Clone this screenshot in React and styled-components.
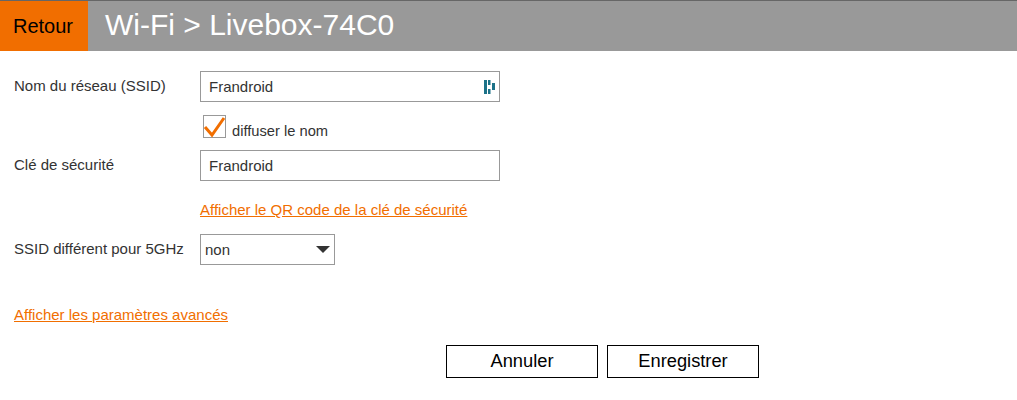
import React from 'react'
import styled, { createGlobalStyle } from 'styled-components'

const GlobalStyle = createGlobalStyle`
  body {
    margin: 0;
    background: #fff;
    font-family: "Liberation Sans", Arial, sans-serif;
    color: #333;
  }
`
const Header = styled.header`
  display: flex;
  height: 50px;
  background: #999;
  border-top: 1px solid #666;
`
const BackButton = styled.div`
  box-sizing: border-box;
  width: 88px;
  padding-left: 13px;
  background: #f16e00;
  color: #000;
  font-size: 20px;
  line-height: 50px;
`
const Title = styled.h1`
  margin: 0 0 0 17px;
  color: #fff;
  font-size: 30px;
  font-weight: 400;
  line-height: 47px;
`
const Form = styled.main`
  padding: 20px 0 0 14px;
`
const Row = styled.div`
  display: flex;
  align-items: flex-start;
`
const Label = styled.label`
  width: 186px;
  font-size: 15px;
  line-height: 16px;
  padding-top: 7px;
`
const InputBox = styled.div`
  box-sizing: border-box;
  display: flex;
  align-items: center;
  justify-content: space-between;
  width: 300px;
  height: 31px;
  padding: 0 4px 0 8px;
  border: 1px solid #999;
  font-size: 15px;
`
const CheckRow = styled.div`
  display: flex;
  align-items: flex-end;
  gap: 6px;
  margin: 13px 0 12px 189px;
  font-size: 14.7px;
  line-height: 14px;
`
const CheckBox = styled.span`
  box-sizing: border-box;
  display: block;
  width: 23px;
  height: 23px;
  border: 1px solid #999;
`
const CheckMark = styled.svg`
  display: block;
  margin: -1px;
`
const Link = styled.a`
  color: #f16e00;
  font-size: 15px;
  line-height: 16px;
  text-decoration: underline;
`
const QrLine = styled.div`
  margin: 21px 0 16px 186px;
  line-height: 16px;
`
const SelectBox = styled.div`
  box-sizing: border-box;
  display: flex;
  align-items: center;
  justify-content: space-between;
  width: 135px;
  height: 31px;
  padding: 0 4px 0 4px;
  border: 1px solid #999;
  font-size: 15px;
`
const Caret = styled.span`
  width: 0;
  height: 0;
  border-left: 7px solid transparent;
  border-right: 7px solid transparent;
  border-top: 7px solid #333;
`
const AdvancedLine = styled.div`
  margin-top: 42px;
  line-height: 16px;
`
const Actions = styled.div`
  display: flex;
  gap: 9px;
  margin: 22px 0 0 432px;
`
const Button = styled.button`
  box-sizing: border-box;
  width: 152px;
  height: 33px;
  padding: 0 0 1px;
  background: #fff;
  border: 1px solid #000;
  color: #000;
  font: 18.3px "Liberation Sans", Arial, sans-serif;
`

const App = () => {
  return (
    <>
      <GlobalStyle />
      <Header>
        <BackButton>Retour</BackButton>
        <Title>Wi-Fi &gt; Livebox-74C0</Title>
      </Header>

      <Form>
        <Row>
          <Label>Nom du réseau (SSID)</Label>
          <InputBox>
            Frandroid
            <svg width="11" height="14" viewBox="0 0 11 14">
              <path d="M0 0h3v14H0zM4 0h2.5v5H4zM4 9h2.5v5H4zM8 3h3v7H8z" fill="#1c7288" />
            </svg>
          </InputBox>
        </Row>

        <CheckRow>
          <CheckBox>
            <CheckMark width="23" height="23" viewBox="0 0 23 23">
              <path d="M2 12l7 8L21 3" fill="none" stroke="#f16e00" strokeWidth="3" />
            </CheckMark>
          </CheckBox>
          diffuser le nom
        </CheckRow>

        <Row>
          <Label>Clé de sécurité</Label>
          <InputBox>Frandroid</InputBox>
        </Row>

        <QrLine>
          <Link href="#">Afficher le QR code de la clé de sécurité</Link>
        </QrLine>

        <Row>
          <Label>SSID différent pour 5GHz</Label>
          <SelectBox>
            non
            <Caret />
          </SelectBox>
        </Row>

        <AdvancedLine>
          <Link href="#">Afficher les paramètres avancés</Link>
        </AdvancedLine>

        <Actions>
          <Button>Annuler</Button>
          <Button>Enregistrer</Button>
        </Actions>
      </Form>
    </>
  )
}

export default App
